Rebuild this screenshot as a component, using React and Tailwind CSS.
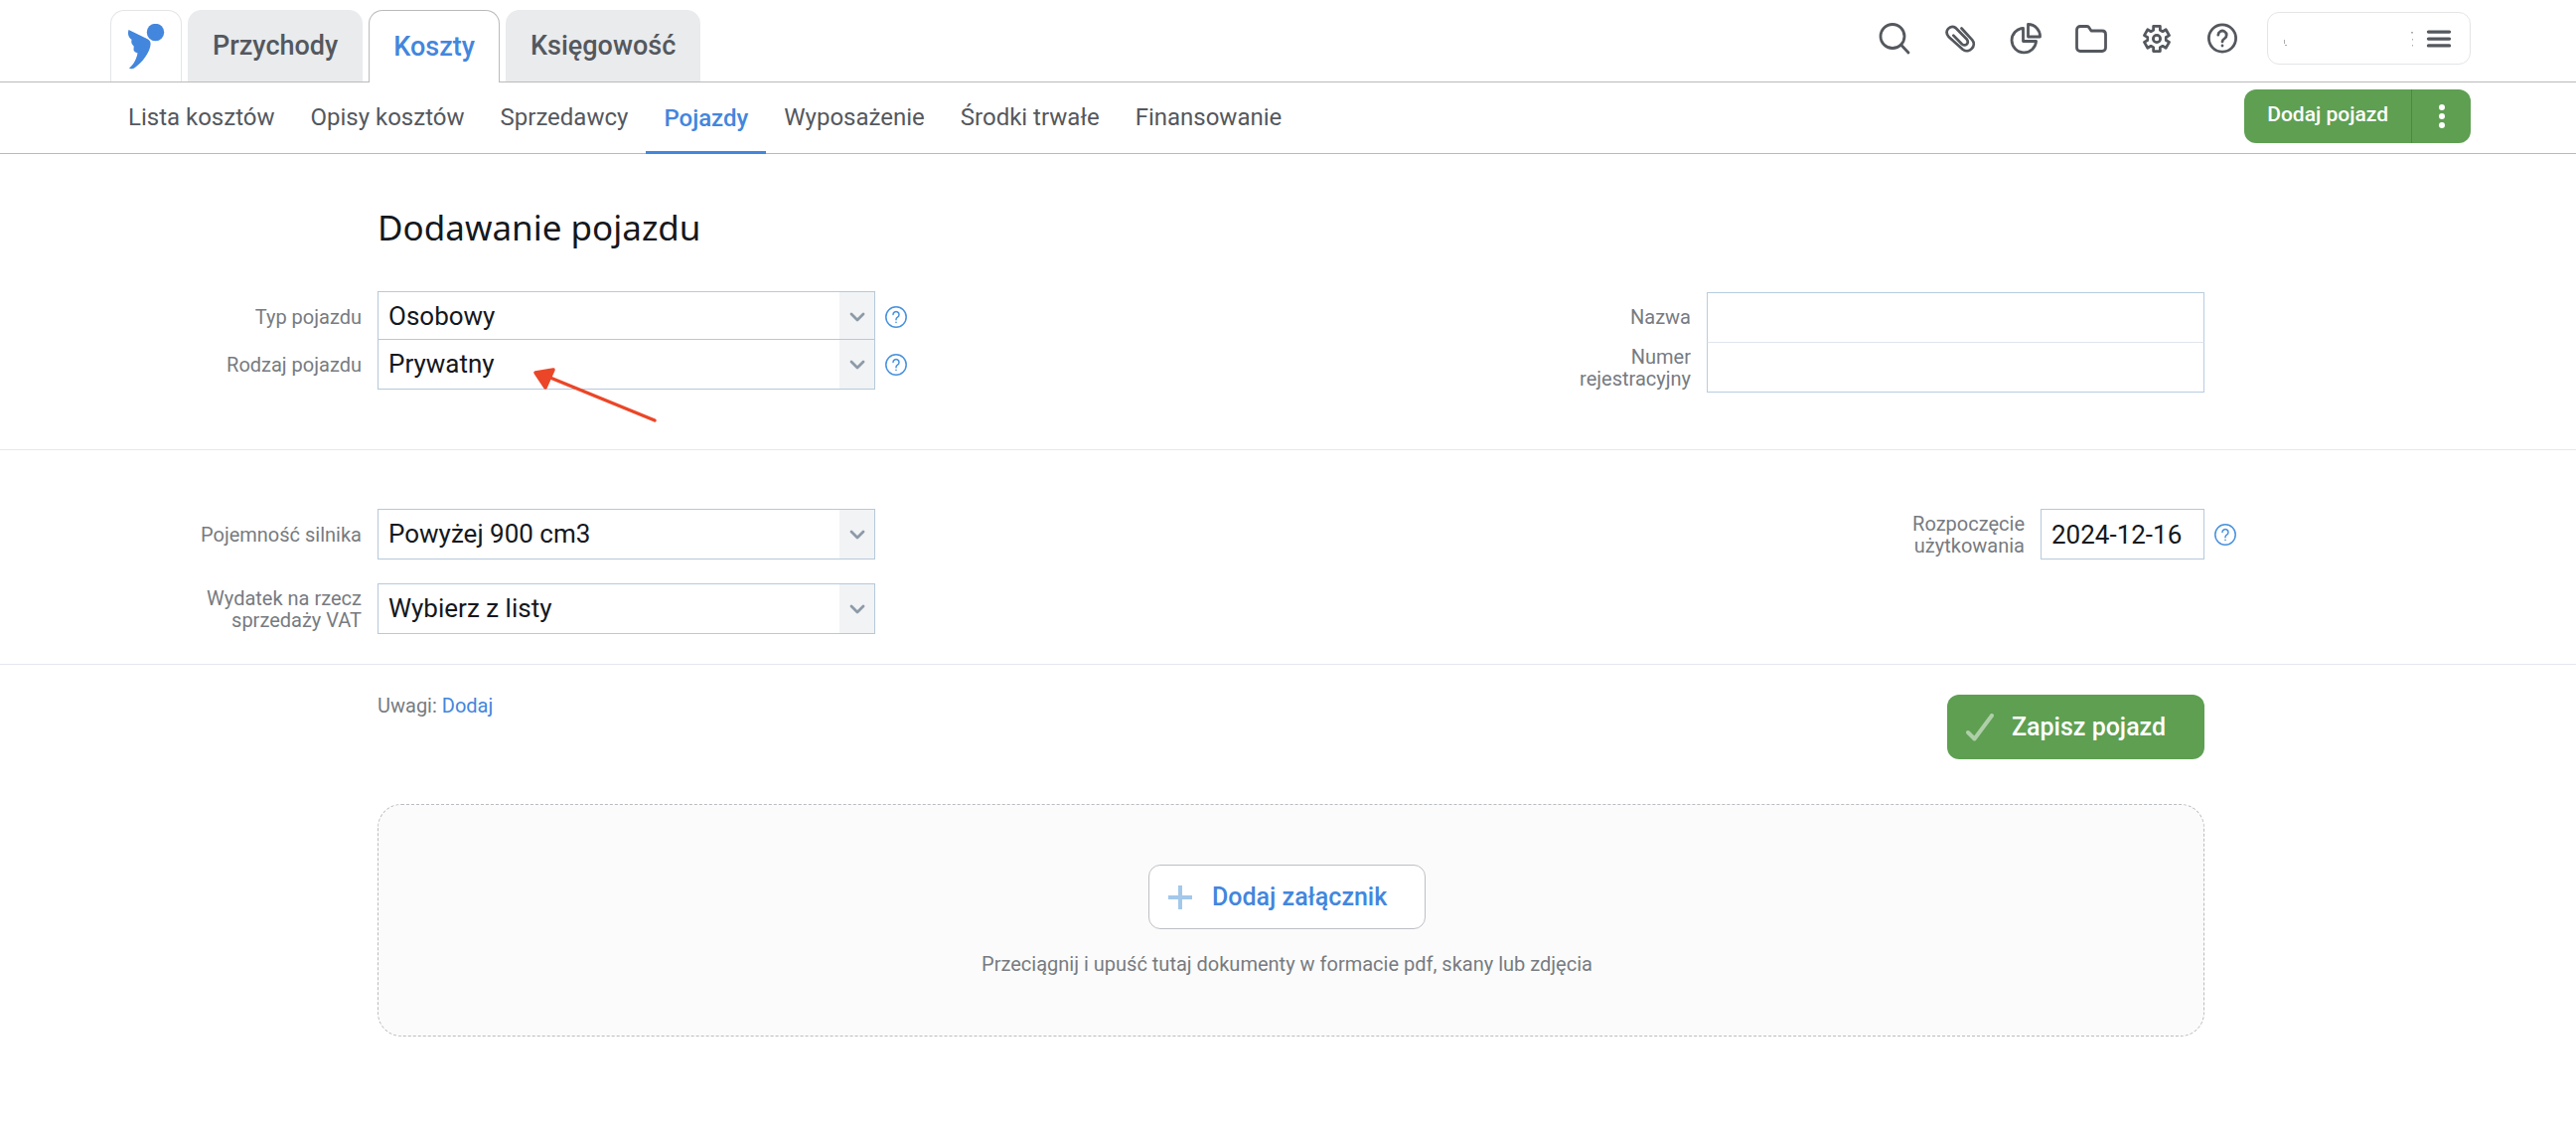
import React from "react";

const mainTabs = ["Przychody", "Koszty", "Księgowość"];
const subTabs = ["Lista kosztów", "Opisy kosztów", "Sprzedawcy", "Pojazdy", "Wyposażenie", "Środki trwałe", "Finansowanie"];

function Svg({ size = 32, w = 3, children, className = "" }) {
  return (
    <svg width={size} height={size} viewBox="0 0 32 32" fill="none" stroke="currentColor" strokeWidth={w} strokeLinecap="round" strokeLinejoin="round" className={className} aria-hidden="true">
      {children}
    </svg>
  );
}

// Outline of a six-toothed gear around (16, 16).
const gearPath =
  "M" +
  [0, 60, 120, 180, 240, 300]
    .flatMap((a) =>
      [[-21, 9.4], [-15, 13], [15, 13], [21, 9.4]].map(([d, r]) => {
        const t = ((a + d - 90) * Math.PI) / 180;
        return (16 + r * Math.cos(t)).toFixed(2) + " " + (16 + r * Math.sin(t)).toFixed(2);
      })
    )
    .join("L") +
  "Z";

const tools = [
  ["Szukaj", <Svg key="s" w={2.8}><circle cx="14" cy="13.500" r="12" /><path d="M22.500 22 30 30" /></Svg>],
  ["Załączniki", <Svg key="a" w={2.7}><path d="M17.500 5.500 28.200 17.200C33 23 25.500 31.500 19 27L4.500 14C-.5 8 6 1.500 11.500 5L22.800 16.500C25.500 20.500 21.500 24 18 21.500L9.300 12.600" /></Svg>],
  ["Raporty", <Svg key="r" w={2.8}><path d="M13.500 5.300A12.300 12.300 0 1 0 26.600 18.500H13.500Z" /><path d="M18.500 1.500A12 12 0 0 1 30.500 14H18.500Z" /></Svg>],
  ["Dokumenty", <Svg key="d" w={2.8}><path d="M5 3.500h6.500c1 0 1.600.3 2.200 1l2.300 3.500h11c2 0 3.500 1.400 3.500 3.500V25c0 2-1.500 3.500-3.500 3.500H5c-2 0-3.500-1.500-3.500-3.500V7c0-2 1.500-3.500 3.500-3.500Z" /></Svg>],
  ["Ustawienia", <Svg key="u" w={2.8}><path d={gearPath} /><circle cx="16" cy="16" r="3.600" /></Svg>],
  ["Pomoc", <Svg key="p" w={2.8}><circle cx="16" cy="15.500" r="13.600" /><path d="M11.800 12.200a4.200 4.200 0 1 1 6.300 3.700c-1.500.9-2.100 1.500-2.100 3" /><path d="M16 22.900v.2" /></Svg>],
];

function Help({ label }) {
  return (
    <button type="button" aria-label={label} className="shrink-0 text-[#4791de]">
      <svg width="22" height="22" viewBox="0 0 22 22" fill="none" stroke="currentColor" strokeWidth="1.500" strokeLinecap="round" aria-hidden="true">
        <circle cx="11" cy="11" r="10.200" />
        <path d="M8 8.600a3 3 0 1 1 4.500 2.600c-1 .6-1.500 1.100-1.500 2.200v.4M11 16.200v.2" />
      </svg>
    </button>
  );
}

function Label({ htmlFor, children }) {
  return (
    <label htmlFor={htmlFor} className="w-[184px] shrink-0 text-right text-[20px] leading-[22px] text-[#777b81]">
      {children}
    </label>
  );
}

function SelectField({ id, label, value, help, joined, children }) {
  return (
    <div className={"flex items-center gap-4 " + (joined ? "-mt-[3px]" : "")}>
      <Label htmlFor={id}>{label}</Label>
      <div className="flex items-center gap-2.5">
        <div className="relative">
          <select id={id} defaultValue={value} className="block h-[51px] w-[501px] appearance-none border border-[#b6c9da] bg-white pl-[10px] pr-10 text-[26px] text-[#15181d]">
            <option>{value}</option>
          </select>
          <span className="pointer-events-none absolute inset-y-px right-px flex w-[35px] items-center justify-center bg-[#f1f3f5] text-[#8d9aa8]">
            <svg width="16" height="10" viewBox="0 0 16 10" fill="none" stroke="currentColor" strokeWidth="2.800" strokeLinecap="round" strokeLinejoin="round" aria-hidden="true">
              <path d="M2 2l6 6 6-6" />
            </svg>
          </span>
          {children}
        </div>
        {help && <Help label={"Pomoc: " + label} />}
      </div>
    </div>
  );
}

export default function App() {
  return (
    <div className="min-h-screen bg-white font-['Roboto',sans-serif] text-[#54585e]">
      <header className="flex items-end justify-between border-b border-[#bababa] pl-[111px] pr-[106px] pt-2.5">
        <nav className="flex items-end gap-1.5" aria-label="Moduły">
          <a href="#start" aria-label="Strona główna" className="flex h-[72px] w-[72px] justify-center rounded-t-[14px] border border-b-0 border-[#e3e5e7] pt-[13px]">
            <svg width="38" height="46" viewBox="0 0 38 46" fill="#4386dd" aria-hidden="true">
              <circle cx="28.500" cy="8.500" r="8.700" />
              <path d="M1.500 6 20 15c2.500 1.300 3.800 3 3.600 5.500C23 29 15 39 7.500 44.200c-1.600 1.200-4.800 1.400-5.500.4C7 40.500 9.500 35 10.500 29.500 8 28.500 6 27.500 6.600 25c-.2-1.500.8-2.500-.8-3.600C4.200 20 4 18 4.500 15.700 1.500 14 .2 10 1.500 6Z" />
            </svg>
          </a>
          {mainTabs.map((t) => (
            <a
              key={t}
              href={"#" + t}
              className={
                t === "Koszty"
                  ? "-mb-px flex h-[73px] items-center rounded-t-[14px] border border-b-0 border-[#bababa] bg-white px-6 text-[27px] font-medium text-[#4386dd]"
                  : "flex h-[72px] items-center rounded-t-[14px] bg-[#e9ebed] px-[25px] text-[27px] font-medium"
              }
            >
              {t}
            </a>
          ))}
        </nav>
        <div className="flex items-center gap-[29px] self-start pt-0.5">
          <div className="flex items-center gap-[34px]">
            {tools.map(([name, icon]) => (
              <button key={name} type="button" aria-label={name}>{icon}</button>
            ))}
          </div>
          <button type="button" aria-label="Menu konta" className="flex h-[53px] w-[205px] items-center justify-end gap-3 rounded-[12px] border border-[#e3e5e7] pr-[18px]">
            <svg width="132" height="16" viewBox="0 0 132 16" fill="#a9acb0" aria-hidden="true">
              <path d="M1 9h1v4H1ZM2 14h2v1H2ZM129 1h2v1.500h-2ZM130 8h1v1.500h-1ZM130 14h1v1.500h-1Z" />
            </svg>
            <Svg size={26} w={4}><path d="M3 7.500h26M3 16h26M3 24.500h26" /></Svg>
          </button>
        </div>
      </header>

      <div className="flex items-start justify-between border-b border-[#bababa] pl-[111px] pr-[106px]">
        <nav className="flex" aria-label="Koszty">
          {subTabs.map((t) => (
            <a
              key={t}
              href={"#" + t}
              className={
                t === "Pojazdy"
                  ? "-mb-px flex h-[72px] items-center border-b-3 border-[#4386dd] px-[18px] pt-0.5 text-[24px] font-medium text-[#4386dd]"
                  : "flex h-[71px] items-center px-[18px] pb-0.5 text-[24px]"
              }
            >
              {t}
            </a>
          ))}
        </nav>
        <div className="mt-[7px] flex h-[54px] overflow-hidden rounded-[12px] bg-[#5e9f52] text-white">
          <button type="button" className="px-[23px] pb-0.5 text-[21px] font-medium">Dodaj pojazd</button>
          <button type="button" aria-label="Więcej" className="flex w-[60px] items-center justify-center border-l border-[#4b8a41]">
            <svg width="6" height="24" viewBox="0 0 6 24" fill="currentColor" aria-hidden="true">
              <circle cx="3" cy="3" r="3" /><circle cx="3" cy="12" r="3" /><circle cx="3" cy="21" r="3" />
            </svg>
          </button>
        </div>
      </div>

      <form>
        <section className="border-b border-[#e6e8ef] pb-[57px] pl-[180px] pr-[374px] pt-[46px]">
          <h1 className="pl-[200px] font-['Noto_Sans',sans-serif] text-[35px] leading-[56px] text-[#15181d]">Dodawanie pojazdu</h1>
          <div className="mt-9 flex justify-between">
            <div>
              <SelectField id="typ" label="Typ pojazdu" value="Osobowy" help />
              <SelectField id="rodzaj" label="Rodzaj pojazdu" value="Prywatny" help joined>
                <svg className="pointer-events-none absolute left-[155px] top-[27px]" width="130" height="60" viewBox="0 0 130 60" fill="none" stroke="#eb4628" strokeWidth="3.500" strokeLinecap="round" strokeLinejoin="round" aria-hidden="true">
                  <path d="M14 10 58 28 124 55" />
                  <path d="M4 7 22 4 14 22Z" fill="#eb4628" />
                </svg>
              </SelectField>
            </div>
            <div className="pt-px">
              <div className="flex items-center gap-4">
                <Label htmlFor="nazwa">Nazwa</Label>
                <input id="nazwa" type="text" className="h-[50px] w-[501px] border border-b-0 border-[#b6cde0] px-[10px] text-[26px]" />
              </div>
              <div className="flex items-center gap-4">
                <Label htmlFor="numer">Numer<br />rejestracyjny</Label>
                <input id="numer" type="text" className="h-[51px] w-[501px] border border-[#b6cde0] border-t-[#dfe6ec] px-[10px] text-[26px]" />
              </div>
            </div>
          </div>
        </section>

        <section className="flex items-start justify-between border-b border-[#e6e8ef] pb-[30px] pl-[180px] pr-[342px] pt-[59px]">
          <div className="flex flex-col gap-6">
            <SelectField id="pojemnosc" label="Pojemność silnika" value="Powyżej 900 cm3" />
            <SelectField id="wydatek" label="Wydatek na rzecz sprzedaży VAT" value="Wybierz z listy" />
          </div>
          <div className="flex items-center gap-4">
            <Label htmlFor="data">Rozpoczęcie użytkowania</Label>
            <div className="flex items-center gap-2.5">
              <input id="data" type="text" defaultValue="2024-12-16" className="h-[51px] w-[165px] border border-[#b6c9da] pl-[10px] text-[26px] text-[#15181d]" />
              <Help label="Pomoc: Rozpoczęcie użytkowania" />
            </div>
          </div>
        </section>

        <section className="pl-[380px] pr-[374px] pt-[30px]">
          <div className="flex items-start justify-between">
            <p className="text-[20px] leading-[22px] text-[#777b81]">
              Uwagi: <a href="#uwagi" className="text-[#4386dd]">Dodaj</a>
            </p>
            <button type="submit" className="flex h-[65px] w-[259px] items-center gap-[18px] rounded-[12px] bg-[#5e9f52] pl-[19px] text-[25px] font-medium text-white">
              <svg width="28" height="28" viewBox="0 0 28 28" fill="none" stroke="#afcfa9" strokeWidth="4" strokeLinecap="round" strokeLinejoin="round" aria-hidden="true">
                <path d="M2 19l6.500 6.500L26 2" />
              </svg>
              Zapisz pojazd
            </button>
          </div>
          <div className="mt-[45px] flex flex-col items-center rounded-[24px] border border-dashed border-[#b9bcc0] bg-[#fbfbfb] pb-[61px] pr-2 pt-[60px]">
            <button type="button" className="flex h-[65px] w-[279px] items-center gap-[20px] rounded-[12px] border border-[#bcbfc4] bg-white pl-[19px] text-[25px] font-medium text-[#4386dd]">
              <svg width="24" height="24" viewBox="0 0 24 24" stroke="#a3c8ea" strokeWidth="4" aria-hidden="true">
                <path d="M12 0v24M0 12h24" />
              </svg>
              Dodaj załącznik
            </button>
            <p className="mt-6 text-[20px] leading-[22px] text-[#777b81]">Przeciągnij i upuść tutaj dokumenty w formacie pdf, skany lub zdjęcia</p>
          </div>
        </section>
      </form>
    </div>
  );
}
